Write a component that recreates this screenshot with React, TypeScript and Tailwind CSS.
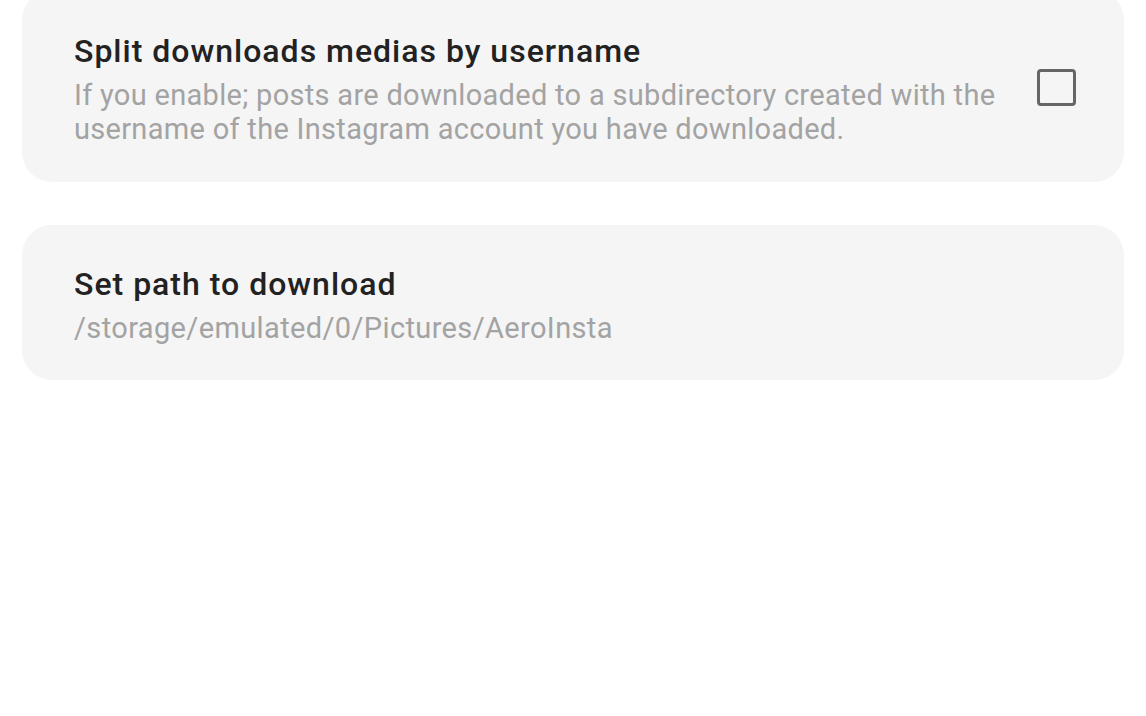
import React from "react";

export default function App() {
  return (
    <div
      className="w-[1146px] h-[716px] bg-white overflow-hidden px-[22px] flex flex-col gap-[43px]"
      style={{ fontFamily: "Roboto, 'Noto Sans', sans-serif" }}
    >
      <div className="mt-[-10px] h-[192px] rounded-[30px] bg-[#f5f5f5] flex items-start pl-[52px] pr-[48px] pt-[42px]">
        <div className="flex-1 flex flex-col">
          <div className="text-[32px] leading-[38px] tracking-[1px] font-medium text-[#222222]">
            Split downloads medias by username
          </div>
          <div className="text-[29px] leading-[34px] tracking-[0.3px] text-[#a3a3a3] mt-[8px]">
            If you enable; posts are downloaded to a subdirectory created with the
            <br />
            username of the Instagram account you have downloaded.
          </div>
        </div>
        <div className="w-[39px] h-[37px] border-[3.5px] border-[#666666] rounded-[4px] mt-[37px]" />
      </div>
      <div className="h-[155px] rounded-[30px] bg-[#f5f5f5] flex flex-col pt-[40px] pl-[52px]">
        <div className="text-[32px] leading-[38px] tracking-[1px] font-medium text-[#222222]">
          Set path to download
        </div>
        <div className="text-[29px] leading-[34px] tracking-[0.37px] text-[#a3a3a3] mt-[8px]">
          /storage/emulated/0/Pictures/AeroInsta
        </div>
      </div>
    </div>
  );
}
